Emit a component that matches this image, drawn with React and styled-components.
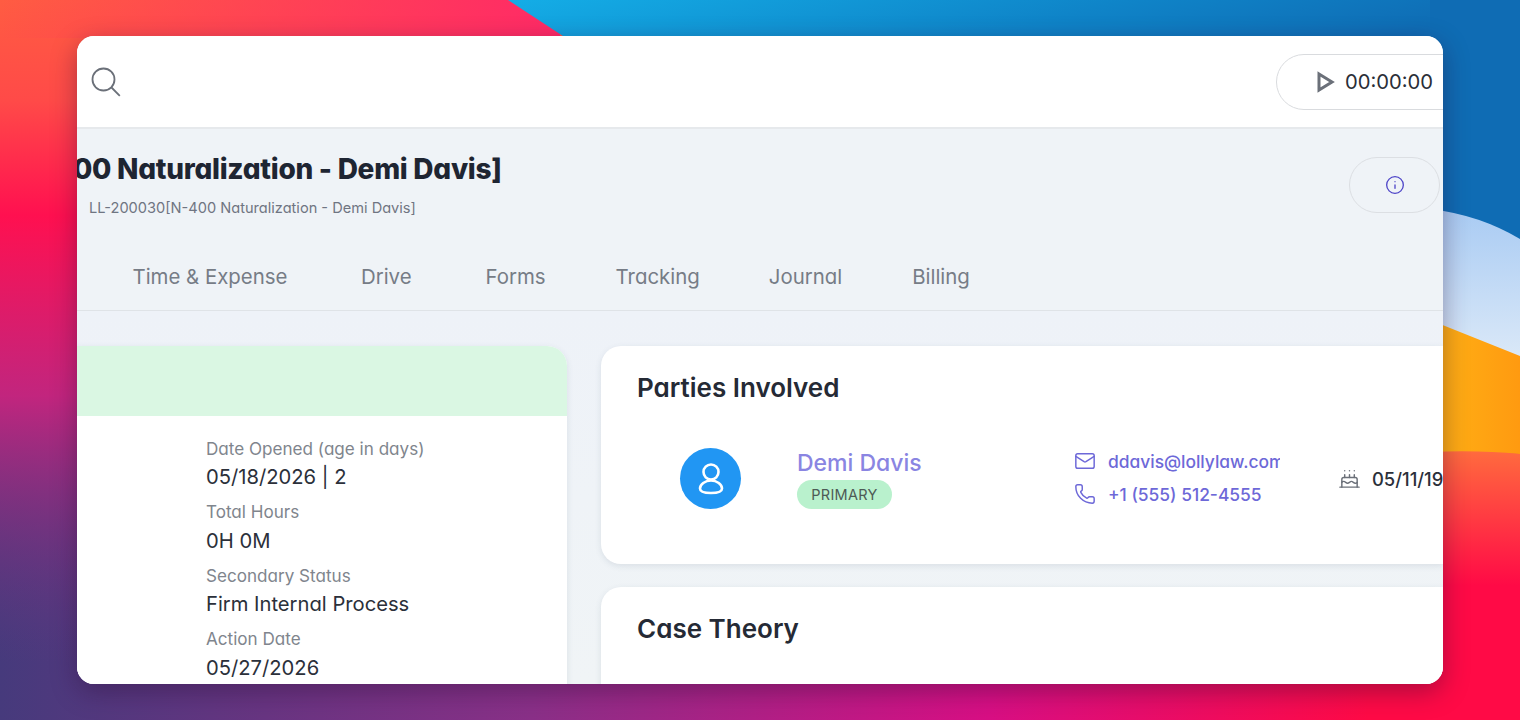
import React from 'react'
import styled, { createGlobalStyle } from 'styled-components'
import { Info, Mail, Phone, Cake } from 'lucide-react'

const GlobalStyle = createGlobalStyle`
html,body{margin:0;height:100%;overflow:hidden;}
body{font-family:Inter,"Noto Sans",sans-serif;font-feature-settings:"cv11" 1;}
`

const Desktop = styled.div`
position:relative;
width:1520px;
height:720px;
padding:36px 77px;
box-sizing:border-box;
overflow:hidden;
`
const WallpaperSvg = styled.svg`
position:absolute;
inset:0;
`
const Win = styled.div`
position:relative;
width:1366px;
height:648px;
border-radius:17px;
overflow:hidden;
background:#eff3f7;
box-shadow:0 8px 26px rgba(40,10,50,.38);
display:flex;
flex-direction:column;
`
const TopBar = styled.div`
height:91px;
flex:none;
background:#fff;
border-bottom:2px solid #e6e9ec;
box-sizing:content-box;
display:flex;
align-items:center;
justify-content:space-between;
padding-left:14px;
`
const Timer = styled.div`
width:180px;
height:54px;
margin-right:-55px;
flex:none;
border:1.5px solid #d9dbde;
border-radius:29px;
display:flex;
align-items:center;
gap:10px;
padding-left:40px;
box-sizing:content-box;
font-size:20.2px;
color:#2a2e37;
`
const Head = styled.div`
height:182px;
flex:none;
box-sizing:border-box;
border-bottom:1px solid #dfe3e7;
display:flex;
flex-direction:column;
`
const TitleRow = styled.div`
display:flex;
justify-content:space-between;
padding-right:3px;
height:112px;
`
const TitleText = styled.div`
overflow:hidden;
padding-top:23px;
`
const Title = styled.h1`
margin:0 0 0 -4px;
font-size:28px;
line-height:34px;
font-weight:800;
color:#1e2532;
white-space:nowrap;
letter-spacing:-.27px;
`
const Sub = styled.div`
margin:12px 0 0 12px;
font-size:14.6px;
line-height:20px;
color:#6f7582;
white-space:nowrap;
`
const InfoPill = styled.div`
width:89px;
height:54px;
margin-top:28px;
border:1.5px solid #dcdfe3;
border-radius:29px;
display:flex;
align-items:center;
justify-content:center;
color:#4f46c8;
box-sizing:content-box;
`
const Tabs = styled.div`
display:flex;
padding-left:55.5px;
margin-top:22px;
`
const Tab = styled.div`
font-size:20.4px;
line-height:28px;
color:#767c86;
margin-right:${p=>p.$gap}px;
white-space:nowrap;
`
const Body = styled.div`
flex:1;
min-height:0;
background:linear-gradient(#eef2f8,#f0f4f6);
display:flex;
gap:34px;
padding-top:35px;
align-items:flex-start;
`
const LeftCard = styled.div`
width:510px;
margin-left:-20px;
flex:none;
height:400px;
background:#fff;
border-radius:20px;
overflow:hidden;
box-shadow:0 2px 6px rgba(60,80,110,.12);
`
const GreenBand = styled.div`
height:70px;
background:#daf7e3;
`
const Fields = styled.div`
padding:20.6px 0 0 149px;
`
const Label = styled.div`
font-size:17.1px;
line-height:24px;
color:#80858d;
`
const Value = styled.div`
font-size:20.2px;
line-height:30px;
margin:1.6px 0 7.9px;
color:#2b303a;
`
const RightCol = styled.div`
flex:1;
display:flex;
flex-direction:column;
gap:23px;
min-width:0;
`
const Card = styled.div`
background:#fff;
border-radius:20px 0 0 20px;
box-shadow:0 2px 6px rgba(60,80,110,.12);
padding:25px 0 0 36px;
height:${p=>p.$h}px;
box-sizing:border-box;
`
const CardTitle = styled.h2`
margin:0;
font-size:26px;
line-height:34px;
font-weight:600;
color:#252a35;
`
const PartyRow = styled.div`
display:grid;
grid-template-columns:160px 277px 206px auto;
align-items:center;
margin-top:43px;
`
const Avatar = styled.div`
width:61px;
height:61px;
margin-left:43px;
border-radius:50%;
background:#2196f3;
display:flex;
align-items:center;
justify-content:center;
`
const PartyName = styled.div`
font-size:23px;
line-height:30px;
margin-bottom:2px;
color:#8a85e2;
font-weight:500;
`
const Badge = styled.div`
height:29px;
width:95px;
line-height:29px;
text-align:center;
border-radius:15px;
background:#b9f1cd;
color:#4d5a55;
font-size:14.5px;
letter-spacing:.3px;
`
const Contacts = styled.div`
overflow:hidden;
display:flex;
flex-direction:column;
gap:10px;
margin-top:-2px;
`
const ContactLine = styled.div`
display:flex;
align-items:center;
gap:12px;
height:23px;
font-size:17.4px;
font-weight:500;
color:#6d68d8;
white-space:nowrap;
svg{flex:none;}
`
const Birth = styled.div`
margin-left:58px;
display:flex;
align-items:center;
gap:11px;
font-size:18.4px;
font-weight:500;
color:#2b303a;
white-space:nowrap;
svg{flex:none;}
`

const Wallpaper = () => (
  <WallpaperSvg width="1520" height="720" viewBox="0 0 1520 720">
    <defs>
      <linearGradient id="bottomBand" x1="0" y1="0" x2="1" y2="0">
        <stop offset="0" stopColor="#463a7c"/>
        <stop offset=".35" stopColor="#8a3088"/>
        <stop offset=".65" stopColor="#d80f84"/>
        <stop offset=".9" stopColor="#ff0a46"/>
      </linearGradient>
      <linearGradient id="leftFade" x1="0" y1="0" x2="0" y2="1">
        <stop offset="0" stopColor="#ff5c42"/>
        <stop offset=".14" stopColor="#ff4a48"/>
        <stop offset=".3" stopColor="#ff1050"/>
        <stop offset=".55" stopColor="#c8247e" stopOpacity=".95"/>
        <stop offset=".92" stopColor="#6a3584" stopOpacity="0"/>
      </linearGradient>
      <linearGradient id="topPink" x1="0" y1="0" x2="1" y2="0">
        <stop offset="0" stopColor="#ff2a66" stopOpacity="0"/>
        <stop offset="1" stopColor="#ff2a66"/>
      </linearGradient>
      <linearGradient id="blue" x1="0" y1="0" x2="1" y2="0.15">
        <stop offset="0" stopColor="#14ade6"/>
        <stop offset=".6" stopColor="#0f84c8"/>
        <stop offset="1" stopColor="#0f6cb4"/>
      </linearGradient>
      <linearGradient id="pale" x1="0" y1="0" x2="0" y2="1">
        <stop offset="0" stopColor="#a9cbf3"/>
        <stop offset="1" stopColor="#dbe9f8"/>
      </linearGradient>
      <linearGradient id="orange" x1="0" y1="0" x2="1" y2="0">
        <stop offset="0" stopColor="#ffb215"/>
        <stop offset="1" stopColor="#ff9a10"/>
      </linearGradient>
      <linearGradient id="redRight" x1="0" y1="0" x2="0" y2="1">
        <stop offset="0" stopColor="#ff6a3e"/>
        <stop offset=".5" stopColor="#ff0a46"/>
        <stop offset="1" stopColor="#ff0a46"/>
      </linearGradient>
    </defs>
    <rect width="1520" height="720" fill="url(#bottomBand)"/>
    <rect width="1520" height="720" fill="url(#leftFade)"/>
    <rect width="560" height="38" fill="url(#topPink)"/>
    <path d="M508 0 L566 38 L1520 38 L1520 0 Z" fill="url(#blue)"/>
    <rect x="1430" y="0" width="90" height="260" fill="#0f6cb4"/>
    <path d="M1430 209 Q1480 215 1520 239 L1520 360 L1430 325 Z" fill="url(#pale)"/>
    <path d="M1430 320 L1520 356 L1520 454 L1430 452 Z" fill="url(#orange)"/>
    <path d="M1430 452 Q1480 450 1520 454 L1520 720 L1430 720 Z" fill="url(#redRight)"/>
  </WallpaperSvg>
)

const SearchGlyph = () => (
  <svg width="30" height="30" viewBox="0 0 30 30" fill="none" stroke="#6b7079" strokeWidth="1.8">
    <circle cx="12.5" cy="12.5" r="11"/>
    <path d="M20.500 20.500 L28.800 28.800"/>
  </svg>
)

const UserGlyph = () => (
  <svg width="26" height="32" viewBox="0 0 26 32" fill="none" stroke="#fff" strokeWidth="2.6">
    <circle cx="13" cy="9" r="7.5"/>
    <path d="M13 17.500c-6 0-11 4-11 8 0 3 4 4.500 11 4.500s11-1.500 11-4.500c0-4-5-8-11-8z"/>
  </svg>
)

const PlayGlyph = () => (
  <svg width="18" height="22" viewBox="0 0 18 22" fill="none" stroke="#6b7079" strokeWidth="3" strokeLinejoin="miter">
    <path d="M2 3 L15 11 L2 19 Z"/>
  </svg>
)

const App = () => {
  return (
    <Desktop>
      <GlobalStyle/>
      <Wallpaper/>
      <Win>
        <TopBar>
          <SearchGlyph/>
          <Timer>
            <PlayGlyph/>
            00:00:00
          </Timer>
        </TopBar>
        <Head>
          <TitleRow>
            <TitleText>
              <Title>00 Naturalization - Demi Davis]</Title>
              <Sub>LL-200030[N-400 Naturalization - Demi Davis]</Sub>
            </TitleText>
            <InfoPill><Info size={20} strokeWidth={1.6}/></InfoPill>
          </TitleRow>
          <Tabs>
            <Tab $gap={73.5}>Time &amp; Expense</Tab>
            <Tab $gap={74}>Drive</Tab>
            <Tab $gap={70}>Forms</Tab>
            <Tab $gap={69}>Tracking</Tab>
            <Tab $gap={70}>Journal</Tab>
            <Tab $gap={0}>Billing</Tab>
          </Tabs>
        </Head>
        <Body>
          <LeftCard>
            <GreenBand/>
            <Fields>
              <Label>Date Opened (age in days)</Label>
              <Value>05/18/2026 | 2</Value>
              <Label>Total Hours</Label>
              <Value>0H 0M</Value>
              <Label>Secondary Status</Label>
              <Value>Firm Internal Process</Value>
              <Label>Action Date</Label>
              <Value>05/27/2026</Value>
            </Fields>
          </LeftCard>
          <RightCol>
            <Card $h={218}>
              <CardTitle>Parties Involved</CardTitle>
              <PartyRow>
                <Avatar><UserGlyph/></Avatar>
                <div>
                  <PartyName>Demi Davis</PartyName>
                  <Badge>PRIMARY</Badge>
                </div>
                <Contacts>
                  <ContactLine><Mail size={22} strokeWidth={1.6}/>ddavis@lollylaw.com</ContactLine>
                  <ContactLine><Phone size={22} strokeWidth={1.6}/>+1 (555) 512-4555</ContactLine>
                </Contacts>
                <Birth><Cake size={23} strokeWidth={1.5} color="#6b7079"/>05/11/1990</Birth>
              </PartyRow>
            </Card>
            <Card $h={200}>
              <CardTitle>Case Theory</CardTitle>
            </Card>
          </RightCol>
        </Body>
      </Win>
    </Desktop>
  )
}

export default App
